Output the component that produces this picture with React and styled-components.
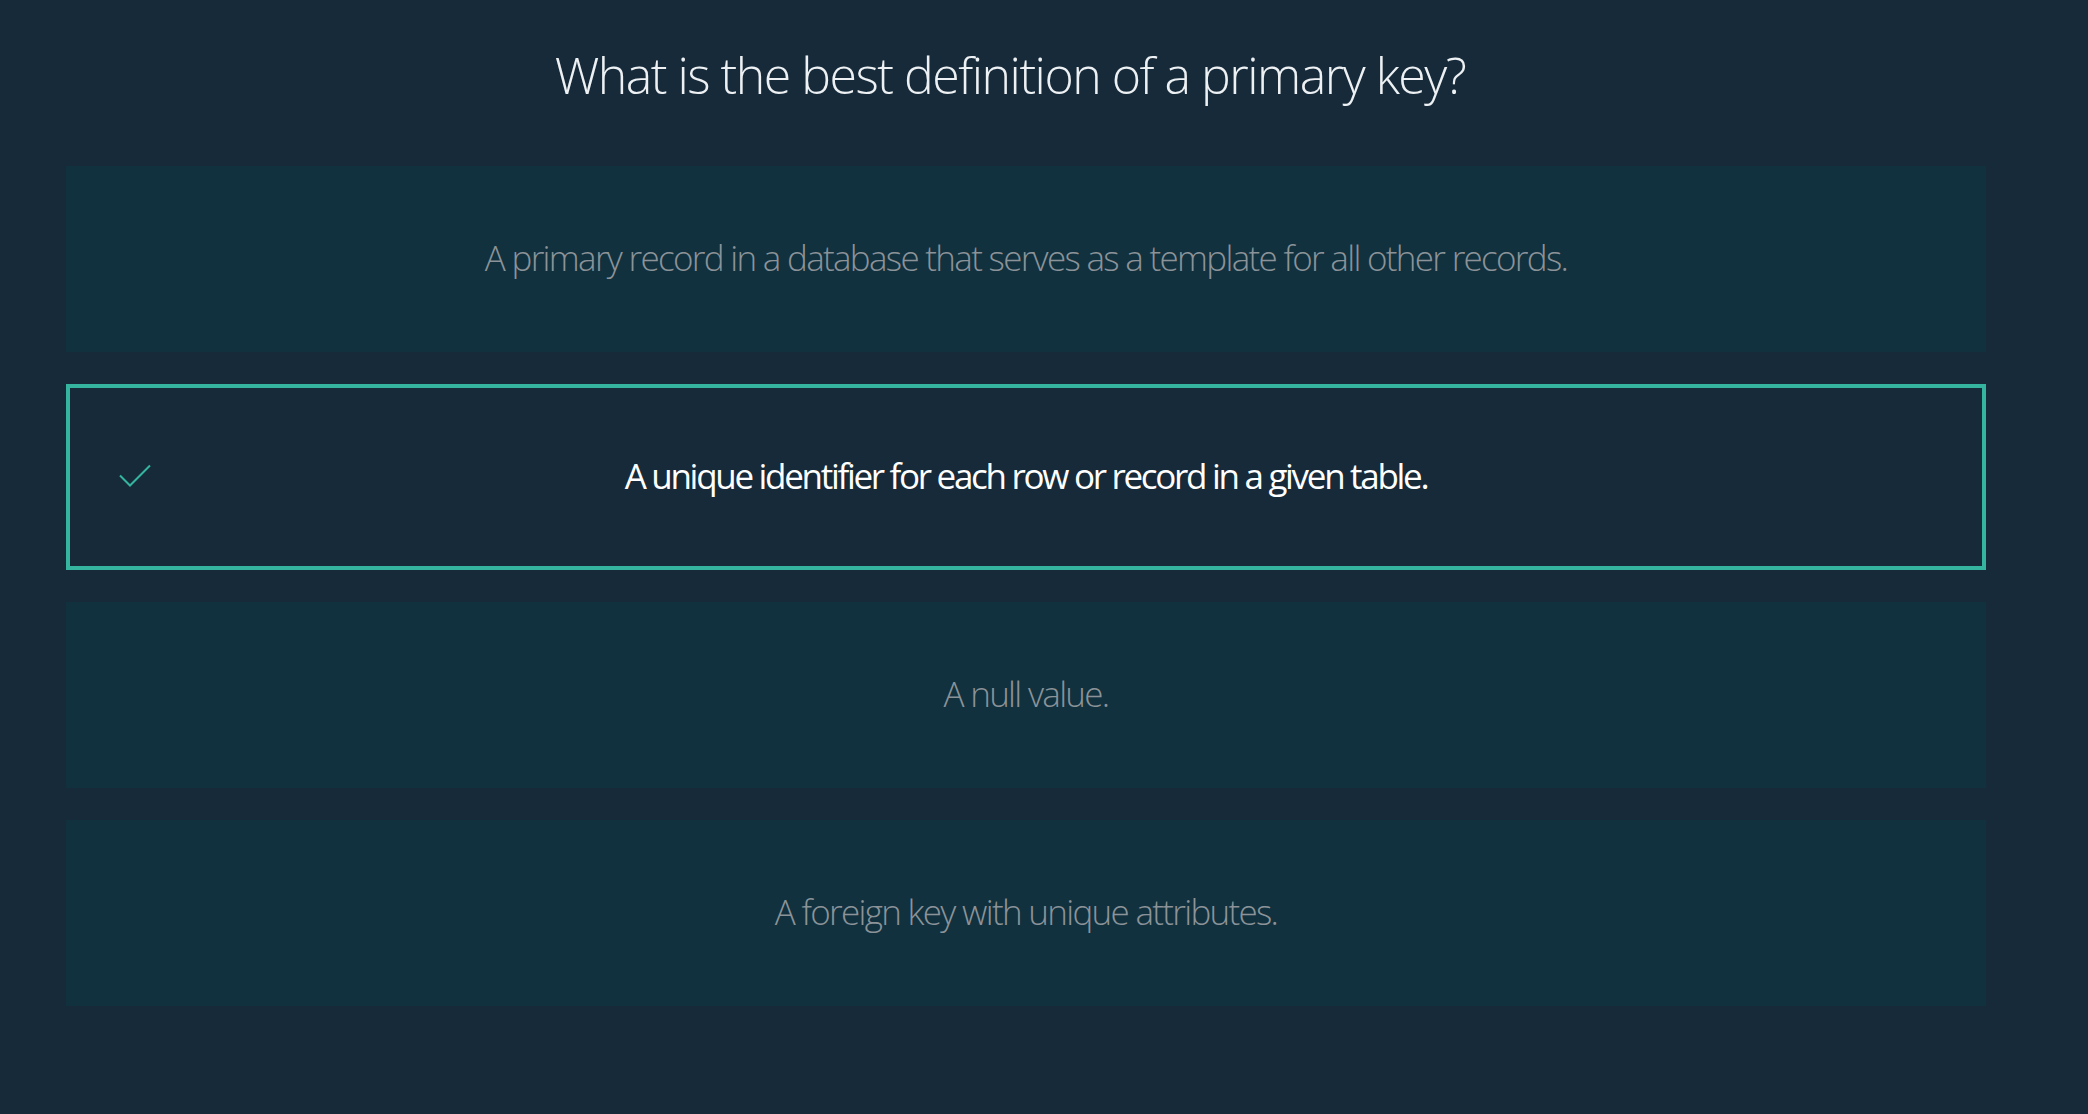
import React from "react";
import styled, { createGlobalStyle } from "styled-components";

const GlobalStyle = createGlobalStyle`
  html, body {
    margin: 0;
    padding: 0;
    background: #162a3a;
  }
  body {
    font-family: "Open Sans", "Noto Sans", sans-serif;
  }
`;

const Page = styled.div`
  min-height: 1114px;
  box-sizing: border-box;
  padding: 0 102px 0 66px;
  background: #162a3a;
`;

const Question = styled.h1`
  margin: 0;
  height: 166px;
  padding: 40px 32px 0 0;
  box-sizing: border-box;
  text-align: center;
  font-weight: 300;
  font-size: 50px;
  letter-spacing: -1.5px;
  line-height: 70px;
  color: #eef1f3;
`;

const Options = styled.div`
  display: flex;
  flex-direction: column;
  gap: 32px;
  width: 1920px;
`;

const Option = styled.div`
  position: relative;
  height: 186px;
  box-sizing: border-box;
  padding-bottom: 4px;
  display: flex;
  align-items: center;
  justify-content: center;
  background: ${(p) => (p.$selected ? "#162a3a" : "#11313f")};
  border: ${(p) => (p.$selected ? "4px solid #35b5a0" : "none")};
  font-size: 35px;
  letter-spacing: ${(p) => (p.$selected ? "-2.3px" : "-1.7px")};
  font-weight: ${(p) => (p.$selected ? 400 : 300)};
  color: ${(p) => (p.$selected ? "#ffffff" : "#8c9398")};
`;

const Check = styled.svg`
  position: absolute;
  left: 48px;
  top: 50%;
  margin-top: -13px;
  width: 34px;
  height: 24px;
`;

const options = [
  "A primary record in a database that serves as a template for all other records.",
  "A unique identifier for each row or record in a given table.",
  "A null value.",
  "A foreign key with unique attributes.",
];

export default function App() {
  return (
    <>
      <GlobalStyle />
      <Page>
        <Question>What is the best definition of a primary key?</Question>
        <Options>
          {options.map((text, i) => (
            <Option key={i} $selected={i === 1}>
              {i === 1 && (
                <Check viewBox="0 0 34 24">
                  <polyline
                    points="2,11.5 12,21.5 32,1.5"
                    fill="none"
                    stroke="#35b5a0"
                    strokeWidth="2"
                  />
                </Check>
              )}
              {text}
            </Option>
          ))}
        </Options>
      </Page>
    </>
  );
}
